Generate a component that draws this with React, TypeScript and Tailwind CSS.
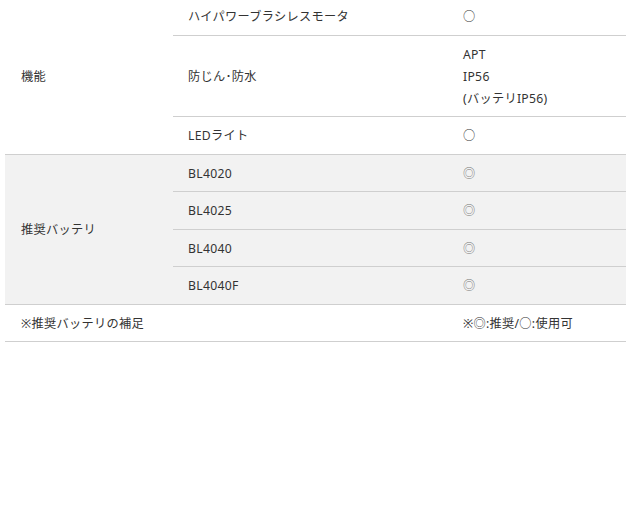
const cell = "pt-[8.25px] pb-[6.25px] px-[15px] border-b border-[#cfcfcf] align-middle text-left font-normal";

const batteries = ["BL4020", "BL4025", "BL4040", "BL4040F"];

export default function App() {
	return (
		<div className="w-[626px] h-[520px] overflow-hidden bg-white">
			<table
				className="ml-[5px] -mt-[2px] w-[621px] table-fixed border-collapse text-[12.2px] leading-[22px] tracking-[0.3px] text-[#333333]"
				style={{ fontFamily: '"Noto Sans", "Noto Sans CJK JP", sans-serif' }}
			>
				<colgroup>
					<col className="w-[168px]" />
					<col className="w-[275px]" />
					<col />
				</colgroup>
				<tbody>
					<tr>
						<th rowSpan={3} className={`${cell} pl-[16px]`}>
							機能
						</th>
						<td className={cell}>ハイパワーブラシレスモータ</td>
						<td className={cell}>○</td>
					</tr>
					<tr>
						<td className={cell}>防じん･防水</td>
						<td className={cell}>
							APT
							<br />
							IP56
							<br />
							(バッテリIP56)
						</td>
					</tr>
					<tr>
						<td className={cell}>LEDライト</td>
						<td className={cell}>○</td>
					</tr>
					{batteries.map((b, i) => (
						<tr key={b} className="bg-[#f2f2f2]">
							{i === 0 && (
								<th rowSpan={4} className={`${cell} pl-[16px]`}>
									推奨バッテリ
								</th>
							)}
							<td className={cell}>{b}</td>
							<td className={`${cell} text-[#777777]`}>◎</td>
						</tr>
					))}
					<tr>
						<th colSpan={2} className={`${cell} pl-[16px]`}>
							※推奨バッテリの補足
						</th>
						<td className={cell}>※◎:推奨/○:使用可</td>
					</tr>
				</tbody>
			</table>
		</div>
	);
}
